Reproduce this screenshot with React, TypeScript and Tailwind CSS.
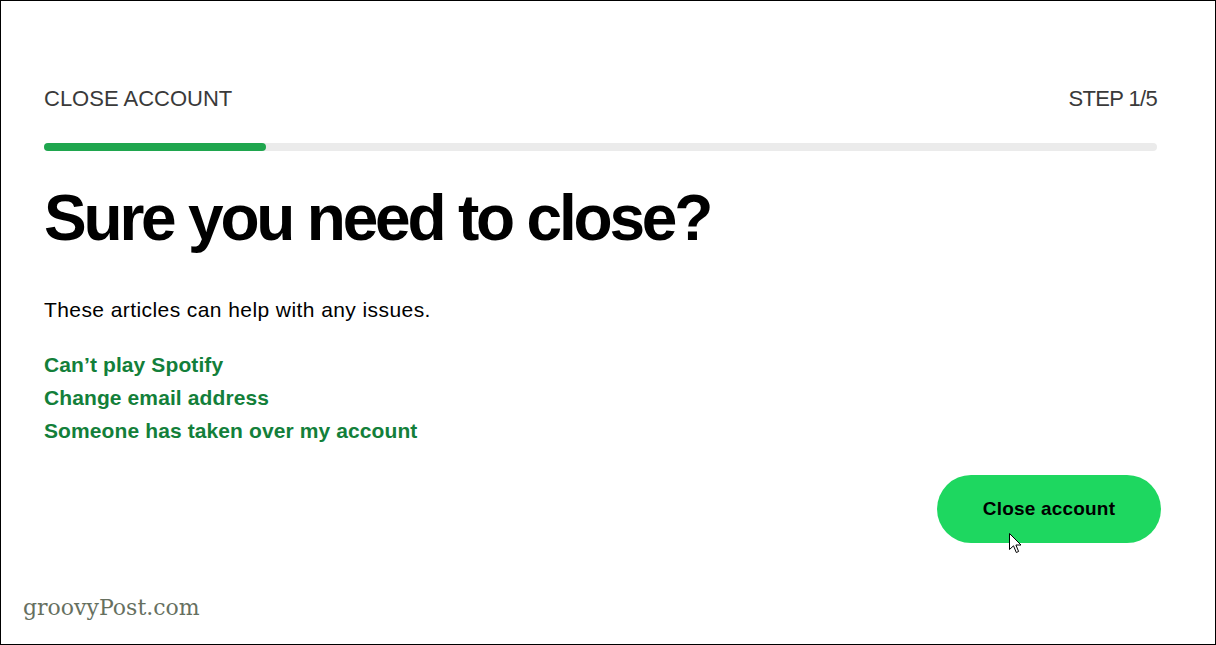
import React from "react";

// Article links shown under the intro text
const articles = [
  "Can\u2019t play Spotify",
  "Change email address",
  "Someone has taken over my account",
];

const Cursor = () => (
  <svg width="13" height="21" viewBox="0 0 13 21" className="absolute left-[72px] top-[58px]">
    <path
      d="M0.5 0.5 L0.5 16.5 L4.5 12.8 L7.3 19.5 L9.6 18.5 L6.9 12 L12 12 Z"
      fill="#fff"
      stroke="#000"
      strokeWidth="1"
      strokeLinejoin="miter"
    />
  </svg>
);

export default function App() {
  return (
    <div className="w-[1216px] h-[645px] bg-white border border-black font-['Liberation_Sans',Arial,sans-serif] relative overflow-hidden">
      <div className="pl-[43px] pr-[58px] pt-[85px]">
        {/* Header row */}
        <div className="flex justify-between items-center text-[22px] text-[#3a3a3a] leading-[26px]">
          <span>CLOSE ACCOUNT</span>
          <span className="tracking-[-0.03em]">STEP 1/5</span>
        </div>

        {/* Progress bar */}
        <div className="mt-[31px] h-[8px] rounded-full bg-[#ebebeb]">
          <div className="h-full w-[222px] rounded-full bg-[#1fa64e]" />
        </div>

        <h1 className="mt-[27px] text-[64px] font-bold tracking-[-0.05em] text-black leading-[80px]">
          Sure you need to close?
        </h1>

        <p className="mt-[39px] text-[21px] tracking-[0.02em] text-black leading-[26px]">
          These articles can help with any issues.
        </p>

        <ul className="mt-[25px] flex flex-col">
          {articles.map((a) => (
            <li key={a} className="text-[21px] font-bold tracking-[0.005em] text-[#137f3a] leading-[33px]">
              {a}
            </li>
          ))}
        </ul>

        <div className="flex justify-end mt-[28px] -mr-[4px]">
          <div className="relative">
            <button className="w-[224px] h-[68px] rounded-full bg-[#1ed760] text-[19px] font-bold tracking-[0.01em] text-black">
              Close account
            </button>
            <Cursor />
          </div>
        </div>
      </div>

      <div className="absolute left-[22px] top-[594px] text-[22px] leading-[26px] text-[#66705f] font-['DejaVu_Serif',serif]">
        groovyPost.com
      </div>
    </div>
  );
}
